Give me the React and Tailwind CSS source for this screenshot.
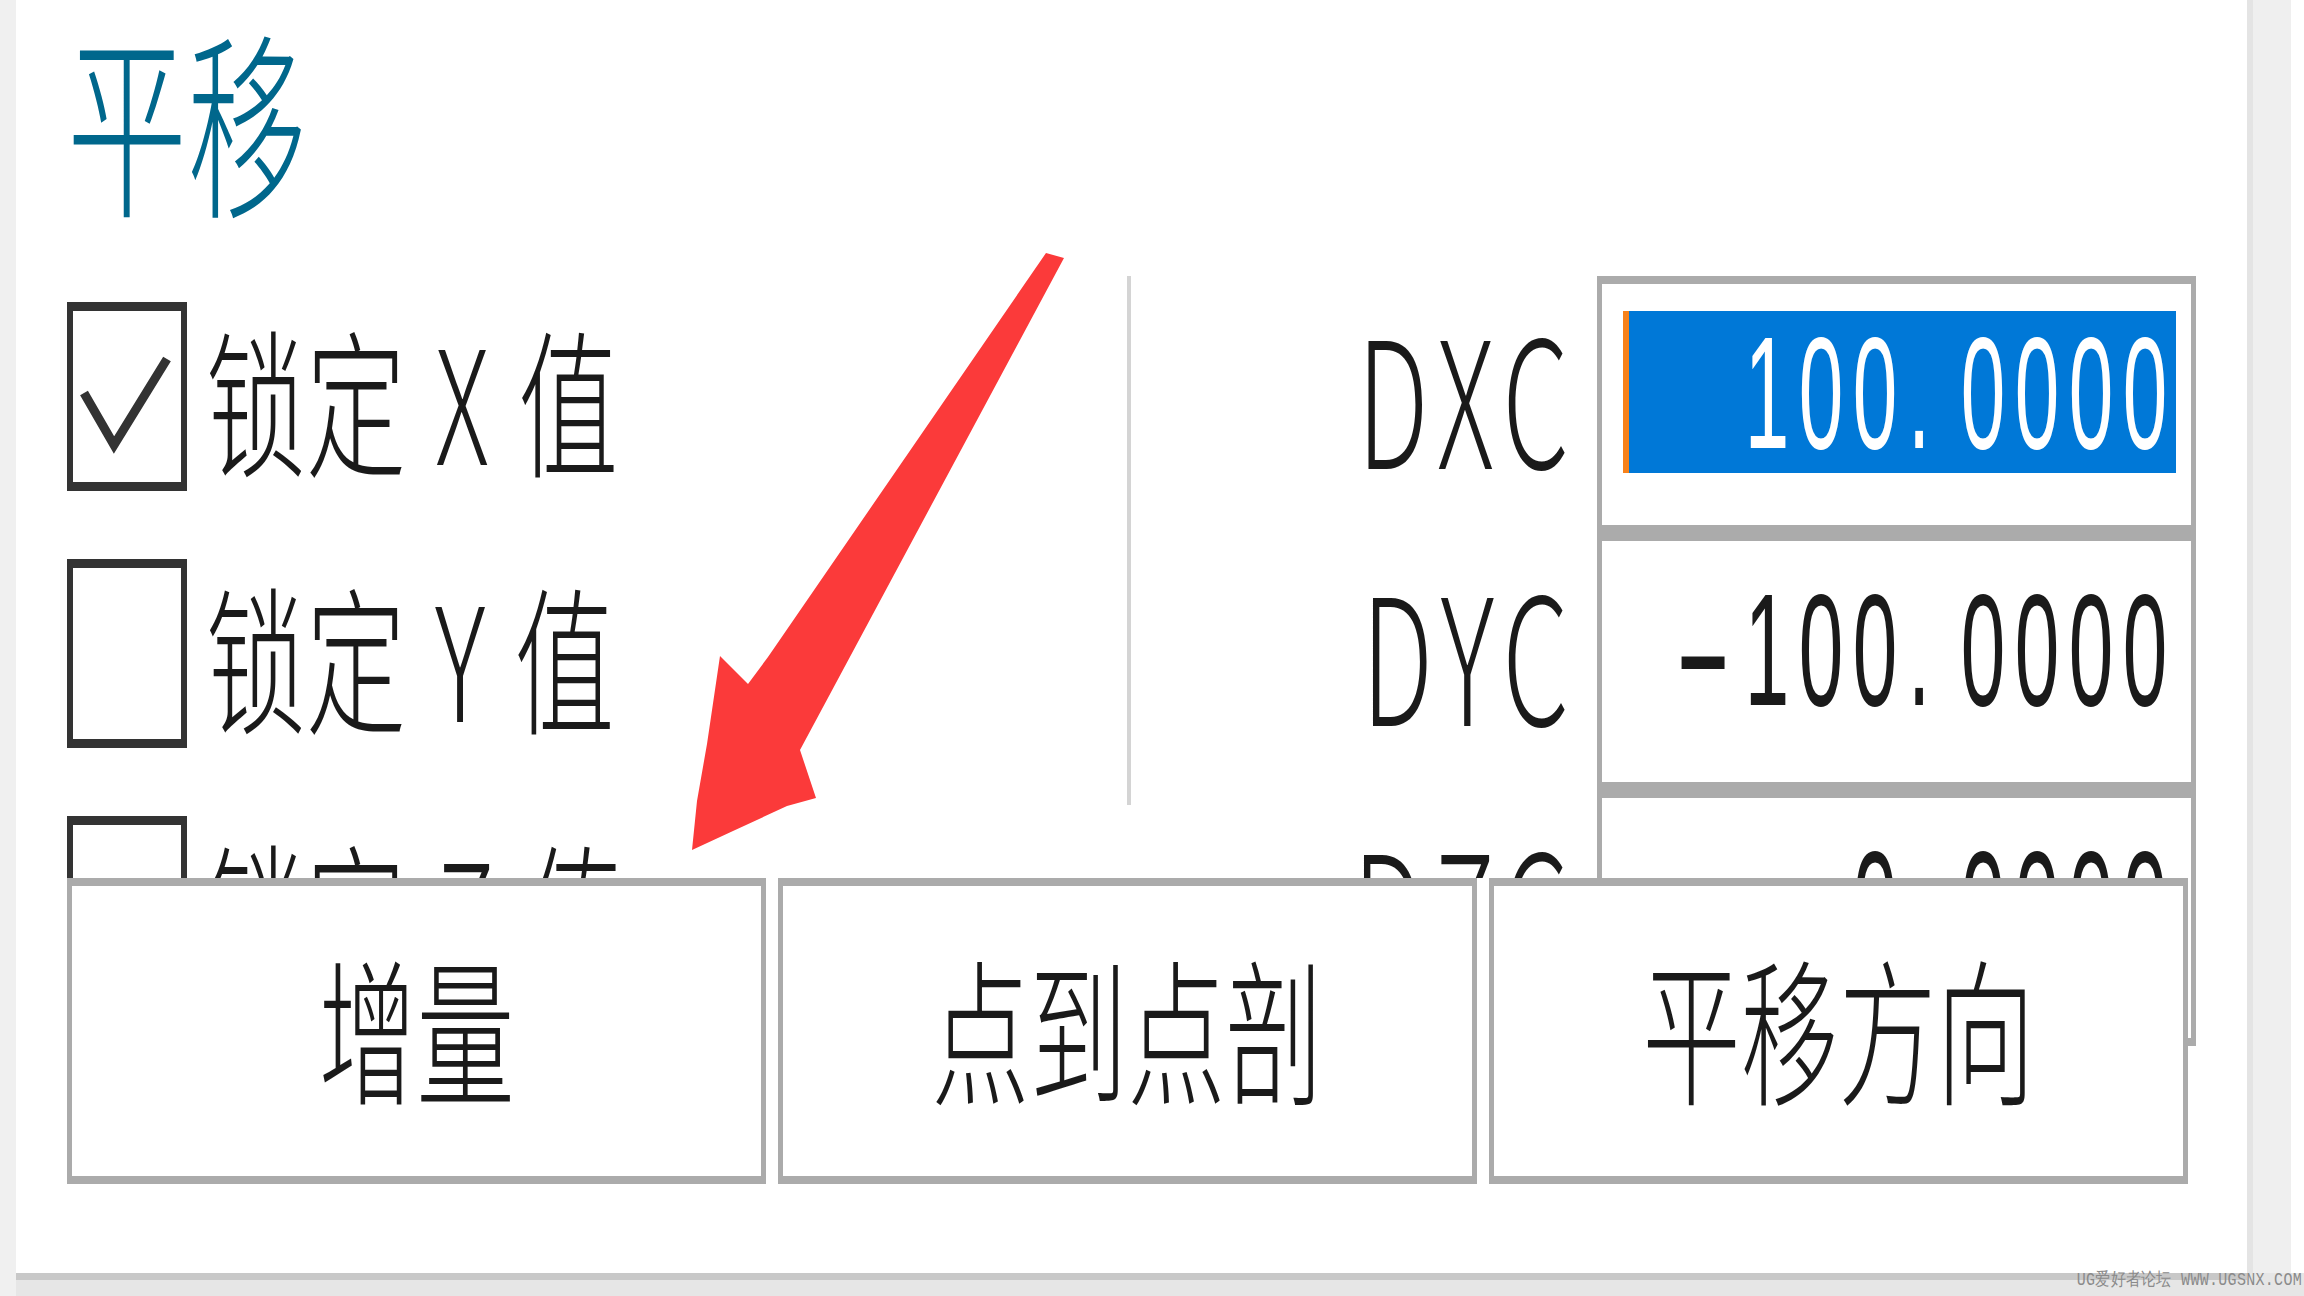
import React from "react";

const CJK = "font-['Noto_Sans_CJK_SC','Noto_Sans_CJK_JP',sans-serif]";
const NUM = "font-['Liberation_Sans','Arial',sans-serif]";
const MONO = "font-['Liberation_Mono','DejaVu_Sans_Mono',monospace]";

const rows = [
  { axis: "X", label: "DXC", value: "100.0000", checked: true, selected: true },
  { axis: "Y", label: "DYC", value: "-100.0000", checked: false, selected: false },
  { axis: "Z", label: "DZC", value: "0.0000", checked: false, selected: false },
];

const actions = ["增量", "点到点剖", "平移方向"];

function CheckBox({ checked }) {
  return (
    <div className="w-[120px] h-[189px] shrink-0 border-x-[6px] border-y-[9px] border-[#333333] bg-white">
      {checked && (
        <svg viewBox="0 0 108 171" className="w-full h-full">
          <polyline
            points="11,82 41,134 94,48"
            fill="none"
            stroke="#333333"
            strokeWidth="9"
            strokeLinejoin="miter"
          />
        </svg>
      )}
    </div>
  );
}

// every character gets the same cell, like the fixed-pitch edit field
function Digits({ text }) {
  return (
    <span className={`${NUM} inline-flex text-[80px] leading-none scale-y-[2]`}>
      {text.split("").map((ch, i) => (
        <span
          key={i}
          className={
            ch === "."
              ? "w-[54px] text-left pl-[6px]"
              : ch === "-"
              ? "w-[54px] text-center scale-x-[2.2] -translate-x-[10px]"
              : "w-[54px] text-center"
          }
        >
          {ch}
        </span>
      ))}
    </span>
  );
}

function ValueBox({ value, selected }) {
  return (
    <div className="h-[257px] border-x-[5px] border-y-[8px] border-[#ababab] bg-white pl-[21px] pr-[15px] pt-[27px]">
      <div
        className={
          selected
            ? "h-[162px] flex items-center justify-end pr-[4px] pt-[4px] bg-[#0078d7] border-l-[6px] border-[#f7821b] text-white"
            : "h-[162px] flex items-center justify-end pr-[4px] pt-[4px] text-[#1a1a1a]"
        }
      >
        <Digits text={value} />
      </div>
    </div>
  );
}

function Arrow() {
  const pts = [
    [1046, 253], [1064, 258], [800, 750], [816, 798], [787, 806], [733, 831], [692, 850],
    [697, 801], [707, 744], [720, 656], [748, 684], [768, 657],
  ];
  return (
    <svg
      className="absolute left-0 top-0 w-[2304px] h-[1296px] pointer-events-none"
      viewBox="0 0 2304 1296"
    >
      <polygon points={pts.map((p) => p.join(",")).join(" ")} fill="#fb3a3a" />
    </svg>
  );
}

export default function App() {
  return (
    <div className="relative w-[2304px] h-[1296px] flex flex-col bg-white overflow-hidden">
      <div className="flex h-[1273px]">
        <div className="w-[16px] bg-[#f0f0f0]" />

        <main className="flex-1 flex flex-col bg-white pl-[51px]">
          <div className="h-[276px] shrink-0 pb-[44px] flex items-center">
            <h1 className={`${CJK} text-[120px] leading-none font-light text-[#00678c] inline-block scale-y-[1.65]`}>
              平移
            </h1>
          </div>

          {/* scrolling rows, cut off by the button strip */}
          <div className="h-[602px] shrink-0 overflow-hidden flex items-start">
            <div className="w-[1060px] flex flex-col">
              {rows.map((r) => (
                <div key={r.axis} className="h-[257px] flex items-center pb-[16px]">
                  <CheckBox checked={r.checked} />
                  <span
                    className={`${CJK} ml-[19px] text-[100px] leading-none font-light text-[#1a1a1a] inline-block scale-y-[1.58] whitespace-pre [word-spacing:7px]`}
                  >
                    {`锁定 ${r.axis} 值`}
                  </span>
                </div>
              ))}
            </div>

            <div className="w-[4px] h-[529px] bg-[#d4d4d4]" />

            <div className="w-[466px] flex flex-col">
              {rows.map((r) => (
                <div key={r.label} className="h-[257px] flex items-center justify-end pr-[18px] pb-[24px]">
                  <span className={`${CJK} text-[106px] leading-none font-light text-[#1a1a1a] inline-block scale-y-[1.66] tracking-[10px]`}>
                    {r.label}
                  </span>
                </div>
              ))}
            </div>

            <div className="w-[599px] flex flex-col">
              {rows.map((r) => (
                <ValueBox key={r.label} value={r.value} selected={r.selected} />
              ))}
            </div>
          </div>

          <div className="flex items-start">
            <div className="flex gap-[12px]">
              {actions.map((a) => (
                <button
                  key={a}
                  className="w-[699px] h-[306px] bg-white border-x-[5px] border-y-[8px] border-[#ababab] flex items-center justify-center pb-[14px]"
                >
                  <span className={`${CJK} text-[98px] leading-none font-light text-[#1a1a1a] inline-block scale-y-[1.6]`}>{a}</span>
                </button>
              ))}
            </div>
            {/* lower edge of the third field showing past the strip */}
            <div className="w-[8px] h-[168px] border-r-[5px] border-b-[8px] border-[#ababab]" />
          </div>
        </main>

        <div className="w-[44px] bg-[#efefef] border-l-[6px] border-[#e4e4e4]" />
        <div className="w-[13px] bg-white" />
      </div>

      <div className="flex h-[23px]">
        <div className="w-[16px] bg-[#f0f0f0]" />
        <div className="flex-1 flex flex-col bg-[#e6e6e6]">
          <div className="h-[7px] bg-[#c8c8c8] mr-[57px]" />
        </div>
      </div>

      <div className="absolute right-[2px] bottom-[6px]">
        <span className={`${MONO} text-[15px] leading-none text-[#8a8a8a] inline-block scale-y-[1.2] tracking-[0.3px] whitespace-pre`}>
          UG爱好者论坛 WWW.UGSNX.COM
        </span>
      </div>

      <Arrow />
    </div>
  );
}
